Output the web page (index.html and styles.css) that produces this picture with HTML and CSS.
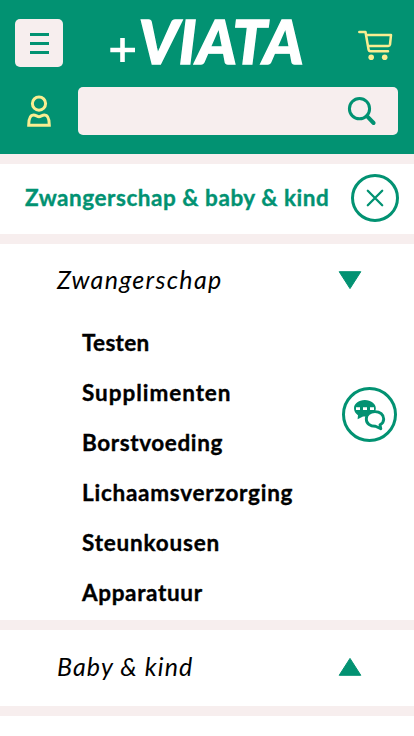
FILE: index.html
```html
<!DOCTYPE html>
<html lang="nl">
<head>
<meta charset="utf-8">
<meta name="viewport" content="width=device-width, initial-scale=1">
<title>+VIATA</title>
<link rel="stylesheet" href="styles.css">
</head>
<body>
<header class="header">
  <div class="top-row">
    <button class="menu" aria-label="Menu"><span></span><span></span><span></span></button>
    <svg class="logo" width="208" height="84" viewBox="0 -10 208 84">
      <path d="M2.3 40H27M14.5 28V52" stroke="#fff" stroke-width="4.6"/>
      <text class="logo-text" x="30.5" y="54.2" textLength="165" lengthAdjust="spacingAndGlyphs">VIATA</text>
    </svg>
    <svg class="cart" width="36" height="32" viewBox="0 0 36 32" fill="none" stroke="#faed91" stroke-width="2.5" stroke-linecap="round" stroke-linejoin="round">
      <path d="M2.3 3H8.5L11.5 20.3Q11.8 22.2 13.5 22.2H31M9.3 6H34L33 15.5Q32.7 16.9 31.3 16.9H11"/>
      <g fill="#faed91" stroke="none"><circle cx="14.2" cy="28.3" r="2.8"/><circle cx="27.7" cy="28.3" r="2.8"/></g>
    </svg>
  </div>
  <div class="search-row">
    <svg class="user" width="26" height="34" viewBox="0 0 26 34" fill="none" stroke="#faed91" stroke-width="3">
      <circle cx="13" cy="9.6" r="6.6"/>
      <path d="M2.7 31.2H23.3Q23.3 21 18.5 21C16 21 15 22.7 13 22.7S10 21 7.5 21Q2.7 21 2.7 31.2Z"/>
    </svg>
    <div class="search">
      <svg width="30" height="30" viewBox="0 0 30 30" fill="none" stroke="#029272">
        <circle cx="12.5" cy="12.7" r="10.1" stroke-width="3"/>
        <path d="M20 20.2L26.6 27" stroke-width="4" stroke-linecap="round"/>
      </svg>
    </div>
  </div>
</header>
<main>
  <div class="title-row">
    <h1>Zwangerschap &amp; baby &amp; kind</h1>
    <button class="close" aria-label="Sluiten">
      <svg width="18" height="18" viewBox="0 0 18 18" stroke="#029272" stroke-width="2.3" stroke-linecap="round"><path d="M1.8 1.8L16.2 16.2M16.2 1.8L1.8 16.2"/></svg>
    </button>
  </div>
  <section class="open">
    <div class="section-head">
      <h2>Zwangerschap</h2>
      <svg width="24" height="20" viewBox="0 0 24 20"><path d="M1.2 1.7H22.8L12 18.6Z" fill="#029272" stroke="#029272" stroke-linejoin="round"/></svg>
    </div>
    <ul>
      <li class="testen">Testen</li>
      <li class="supplimenten">Supplimenten</li>
      <li class="borstvoeding">Borstvoeding</li>
      <li class="verzorging">Lichaamsverzorging</li>
      <li class="steunkousen">Steunkousen</li>
      <li class="apparatuur">Apparatuur</li>
    </ul>
  </section>
  <section class="closed">
    <div class="section-head">
      <h2 class="baby">Baby &amp; kind</h2>
      <svg width="24" height="20" viewBox="0 0 24 20"><path d="M1.2 18.3H22.8L12 1.4Z" fill="#029272" stroke="#029272" stroke-linejoin="round"/></svg>
    </div>
  </section>
</main>
<button class="chat" aria-label="Chat">
  <svg width="55" height="55" viewBox="0 0 55 55" fill="none">
    <circle cx="27.5" cy="27.5" r="26" stroke="#029272" stroke-width="3"/>
    <path d="M22.8 13C16.5 13 12 16.7 12 21.3C12 24.2 13.5 26.5 16 28.2L15.6 32.3L21 29.4C29 29.8 33.8 26.2 33.8 21.3C33.8 16.7 29 13 22.8 13Z" fill="#029272"/>
    <path d="M14 20.2H18V23H14ZM21 20.2H25V23H21ZM28 20.2H32V23H28Z" fill="#fff"/>
    <path d="M33 24.6C27.8 24.6 24.3 27.8 24.3 32C24.3 36.5 28 39.4 33.5 39.3L38.8 41.7L38 37.8C40.4 36.6 41.7 34.5 41.7 32C41.7 27.8 38 24.6 33 24.6Z" fill="#fff" stroke="#029272" stroke-width="2.9" stroke-linejoin="round"/>
  </svg>
</button>
</body>
</html>
```

FILE: styles.css
```css
* { box-sizing: border-box; }
body { margin: 0; min-height: 736px; background: #fff; color: #000; font-family: Lato, "Liberation Sans", sans-serif; }
button { display: flex; align-items: center; justify-content: center; padding: 0; border: 0; background: none; }
h1, h2, ul { margin: 0; padding: 0; }
svg { display: block; flex: none; }
.header { height: 154px; padding: 10px 16px 19px 15px; background: #029272; }
.top-row { display: flex; height: 60px; }
.menu { flex-direction: column; gap: 6px; width: 48px; height: 48px; margin-top: 9px; border-radius: 5px; background: #f7eeee; }
.menu span { width: 19px; height: 3px; background: #029272; }
.logo { margin: -10px 0 -14px 45px; }
.logo-text { fill: #fff; stroke: #fff; stroke-width: 1.3px; font-size: 60.5px; font-weight: 900; font-style: italic; }
.cart { margin: 19px 0 0 41px; }
.search-row { display: flex; align-items: center; gap: 26px; height: 48px; margin-top: 17px; padding-left: 11px; }
.search { display: flex; flex: 1; align-items: center; justify-content: flex-end; height: 48px; padding-right: 21px; border-radius: 5px; background: #f7eeee; }
.title-row { display: flex; align-items: center; justify-content: space-between; height: 90px; padding: 0 15px 2px 25px; border: solid #f7eeee; border-width: 10px 0; }
h1 { padding-bottom: 1px; color: #029272; font-size: 22.5px; line-height: 30px; font-weight: 700; letter-spacing: 0.54px; white-space: nowrap; -webkit-text-stroke: 0.35px; }
.close { width: 48px; height: 48px; border: 3px solid #029272; border-radius: 50%; }
.section-head { display: flex; align-items: center; justify-content: space-between; height: 72px; padding: 0 52px 0 57px; }
h2 { padding-bottom: 2px; font-size: 25px; line-height: 32px; font-weight: 400; font-style: italic; letter-spacing: 1.3px; }
.baby { padding-bottom: 3px; letter-spacing: 1.1px; }
.open { height: 386px; border-bottom: 10px solid #f7eeee; }
.closed { height: 86px; padding-top: 1px; border-bottom: 10px solid #f7eeee; }
ul { margin-top: 2px; padding-left: 82px; list-style: none; }
li { height: 50px; font-size: 22.5px; line-height: 50px; font-weight: 700; -webkit-text-stroke: 0.35px; }
.testen { letter-spacing: 0.3px; }
.supplimenten { letter-spacing: 0.95px; }
.borstvoeding { letter-spacing: 0.6px; }
.verzorging { letter-spacing: 0.75px; }
.steunkousen { letter-spacing: 0.8px; }
.apparatuur { letter-spacing: 0.65px; }
.chat { position: absolute; left: 342px; top: 387px; width: 55px; height: 55px; border-radius: 50%; background: #fff; }
```
